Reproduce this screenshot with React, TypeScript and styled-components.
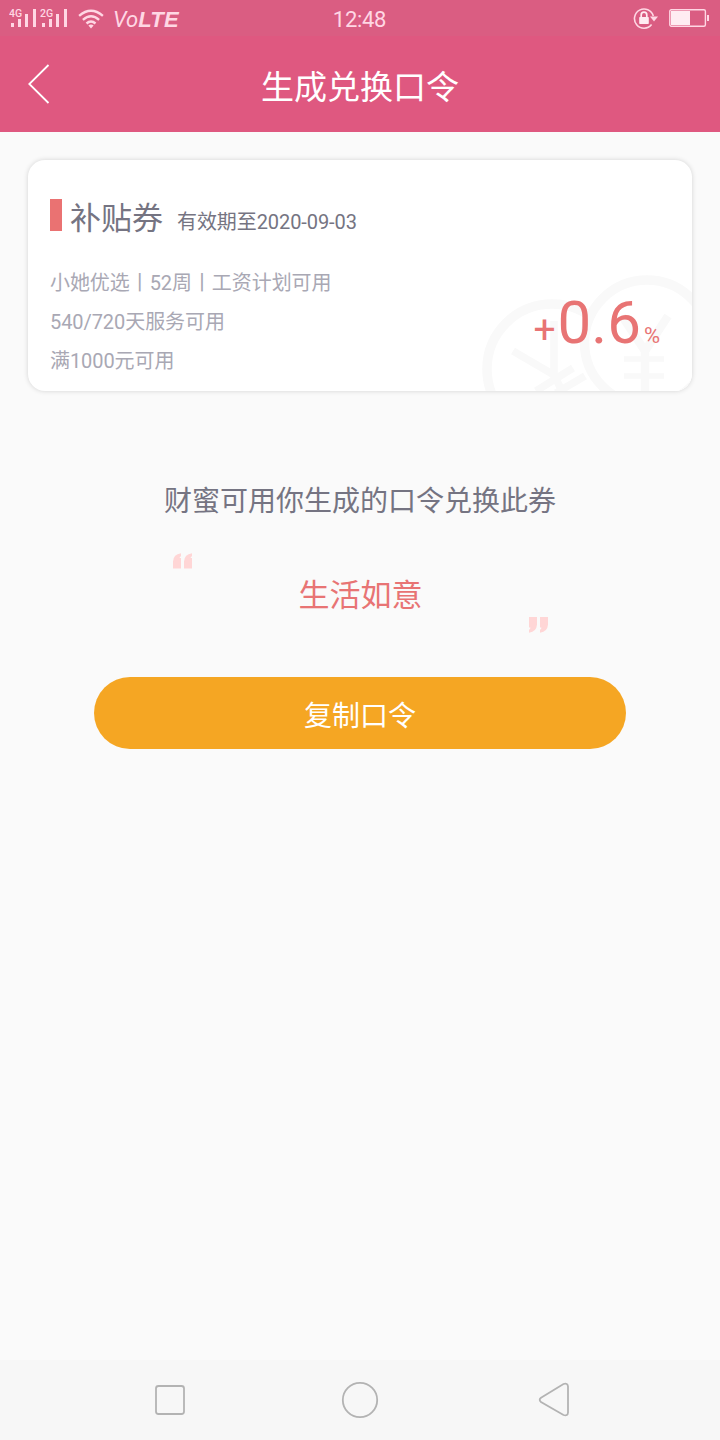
import React from "react";
import styled, { createGlobalStyle } from "styled-components";

const GlobalStyle = createGlobalStyle`
  * { box-sizing: border-box; }
  html, body { margin: 0; padding: 0; }
  body {
    background: #fafafa;
    font-family: Roboto, "Noto Sans CJK SC", sans-serif;
  }
`;

const Screen = styled.div`
  width: 720px;
  height: 1440px;
  display: flex;
  flex-direction: column;
  background: #fafafa;
  overflow: hidden;
`;

const StatusBar = styled.div`
  height: 36px;
  flex: none;
  display: grid;
  grid-template-columns: 1fr auto 1fr;
  align-items: center;
  padding: 0 11px 0 9px;
  background: #da5d82;
  color: #ffd7e4;
`;

const StatusGroup = styled.div<{ $end?: boolean }>`
  display: flex;
  align-items: center;
  justify-content: ${(p) => (p.$end ? "flex-end" : "flex-start")};
  gap: ${(p) => (p.$end ? 10 : 7)}px;
  height: 36px;
`;

const SignalPair = styled.div`
  display: flex;
  margin-bottom: 2px;
`;

const Volte = styled.span`
  font-size: 22px;
  line-height: 36px;
  font-style: italic;
  margin-left: 2px;
  padding-top: 2px;
  b {
    font-family: "Liberation Sans", sans-serif;
    font-weight: 700;
    letter-spacing: 0.2px;
  }
`;

const Clock = styled.span`
  font-size: 22px;
  line-height: 36px;
  letter-spacing: -0.3px;
  padding: 2px 0 0 1px;
`;

const NavBar = styled.header`
  height: 96px;
  flex: none;
  display: grid;
  grid-template-columns: 80px 1fr 80px;
  align-items: center;
  background: #df5880;
`;

const BackButton = styled.button`
  border: 0;
  background: none;
  padding: 0 0 0 27px;
  height: 96px;
  display: flex;
  align-items: center;
`;

const Title = styled.h1`
  margin: 0;
  padding-top: 7px;
  font-size: 33px;
  line-height: 48px;
  font-weight: 400;
  text-align: center;
  color: #fff;
`;

const Content = styled.main`
  flex: 1;
  display: flex;
  flex-direction: column;
  align-items: center;
  padding-top: 28px;
`;

const Card = styled.section`
  position: relative;
  width: 664px;
  height: 231px;
  flex: none;
  display: flex;
  justify-content: space-between;
  align-items: flex-end;
  border-radius: 17px;
  background: #fff;
  box-shadow: 0 0 5px rgba(0, 0, 0, 0.16);
  overflow: hidden;
`;

const Coins = styled.svg`
  position: absolute;
  right: 0;
  bottom: 0;
`;

const CouponInfo = styled.div`
  align-self: flex-start;
  padding: 35px 0 0 22px;
`;

const CouponHead = styled.div`
  display: flex;
  align-items: baseline;
  height: 48px;
  margin-bottom: 20px;
  color: #757482;
`;

const Marker = styled.i`
  align-self: flex-start;
  width: 12px;
  height: 32px;
  margin: 4px 8px 0 0;
  background: #ea7272;
`;

const CouponName = styled.span`
  font-size: 31px;
  line-height: 48px;
`;

const Validity = styled.span`
  margin-left: 14px;
  font-size: 20px;
  letter-spacing: -0.08px;
`;

const Terms = styled.p<{ $height: number }>`
  margin: 0;
  font-size: 20px;
  letter-spacing: -0.07px;
  line-height: ${(p) => p.$height}px;
  color: #a9a8b4;
`;

const Rate = styled.div`
  position: relative;
  display: flex;
  align-items: baseline;
  padding: 0 32px 20px 0;
  line-height: 70px;
  color: #e87474;
`;

const RatePart = styled.span<{ $size: number; $gap?: number }>`
  font-size: ${(p) => p.$size}px;
  margin-right: ${(p) => p.$gap ?? 0}px;
`;

const Hint = styled.p`
  margin: 91px 0 0;
  font-size: 28px;
  line-height: 40px;
  color: #757482;
`;

const Phrase = styled.div`
  width: 376px;
  height: 80px;
  margin-top: 31px;
  display: flex;
  justify-content: space-between;
  color: #e87474;
  font-size: 31px;
  line-height: 86px;
`;

const Quote = styled.svg<{ $low?: boolean }>`
  align-self: ${(p) => (p.$low ? "flex-end" : "flex-start")};
`;

const CopyButton = styled.button`
  width: 532px;
  height: 72px;
  margin-top: 44px;
  padding: 7px 0 0;
  border: 0;
  border-radius: 36px;
  background: #f5a623;
  color: #fff;
  font-family: inherit;
  font-size: 28px;
  line-height: 40px;
`;

const SystemNav = styled.nav`
  height: 80px;
  flex: none;
  display: grid;
  grid-template-columns: 32px 38px 33px;
  align-items: center;
  column-gap: 155px;
  padding-left: 154px;
  background: #f7f7f7;

  svg:last-child { margin-left: 4px; }
`;

function Signal({ label }: { label: string }) {
  return (
    <svg width="31" height="22" viewBox="0 0 31 22" fill="currentColor">
      <text x="0" y="9.5" fontSize="10.5" fontWeight="500" fontFamily="Roboto">{label}</text>
      <rect x="2" y="16" width="3" height="4" />
      <rect x="9" y="12" width="3" height="8" />
      <rect x="16" y="7" width="3" height="13" />
      <rect x="24" y="2" width="3" height="18" />
    </svg>
  );
}

function Wifi() {
  return (
    <svg width="26" height="20" viewBox="0 0 26 20" fill="none" stroke="currentColor" strokeWidth="2.4">
      <path d="M1.1 6.9Q13-3.3 24.9 6.9" />
      <path d="M4.9 10.8Q13 3.8 21.1 10.8" />
      <path d="M8.5 14.5Q13 10.4 17.5 14.5" />
      <path d="M10.4 16.5Q13 14.4 15.6 16.5L13 19.4Z" fill="currentColor" stroke="none" />
    </svg>
  );
}

function RotationLock() {
  return (
    <svg width="26" height="26" viewBox="0 0 26 26" fill="none" stroke="currentColor">
      <path d="M18.6 18.6A9.6 9.6 0 1 1 20.3 10" strokeWidth="1.6" />
      <path d="M17 10.6H25L21 15.4Z" fill="currentColor" stroke="none" />
      <rect x="6.2" y="11" width="9.6" height="7" rx="0.8" fill="#ffecf2" stroke="none" />
      <path d="M8.2 11.5V9a2.8 2.8 0 0 1 5.6 0V11.5" stroke="#ffecf2" strokeWidth="1.7" />
    </svg>
  );
}

function Battery() {
  return (
    <svg width="40" height="20" viewBox="0 0 40 20">
      <rect x="0.8" y="0.8" width="35.6" height="16.4" rx="1.5" fill="none" stroke="currentColor" strokeWidth="1.4" />
      <rect x="2" y="2" width="19" height="14" fill="#ffecf2" />
      <rect x="38" y="6" width="2" height="6" fill="currentColor" />
    </svg>
  );
}

function CoinArt() {
  return (
    <Coins width="212" height="120" viewBox="0 0 212 120" fill="none" stroke="#f9f9f9" strokeWidth="9.5">
      <circle cx="72" cy="98" r="65" />
      <path d="M74 50V104L83 122M33 80L74 104M56 120L93 97M76 122L105 105" strokeWidth="7.5" strokeLinejoin="round" />
      <circle cx="167" cy="71.5" r="62.5" fill="#fff" />
      <path d="M142 45L165 80L188 45M165 80V120" strokeWidth="8.5" />
      <path d="M144 88H184M144 105H184" strokeWidth="5.5" />
    </Coins>
  );
}

export default function App() {
  return (
    <Screen>
      <GlobalStyle />
      <StatusBar>
        <StatusGroup>
          <SignalPair>
            <Signal label="4G" />
            <Signal label="2G" />
          </SignalPair>
          <Wifi />
          <Volte>Vo<b>LTE</b></Volte>
        </StatusGroup>
        <Clock>12:48</Clock>
        <StatusGroup $end>
          <RotationLock />
          <Battery />
        </StatusGroup>
      </StatusBar>
      <NavBar>
        <BackButton aria-label="返回">
          <svg width="23" height="40" viewBox="0 0 23 40" fill="none" stroke="#fff" strokeWidth="1.8">
            <path d="M21.5 1L2.3 20L21.5 39" />
          </svg>
        </BackButton>
        <Title>生成兑换口令</Title>
      </NavBar>
      <Content>
        <Card>
          <CoinArt />
          <CouponInfo>
            <CouponHead>
              <Marker />
              <CouponName>补贴券</CouponName>
              <Validity>有效期至2020-09-03</Validity>
            </CouponHead>
            <Terms $height={40}>小她优选丨52周丨工资计划可用</Terms>
            <Terms $height={39}>540/720天服务可用</Terms>
            <Terms $height={38}>满1000元可用</Terms>
          </CouponInfo>
          <Rate>
            <RatePart $size={39} $gap={2}>+</RatePart>
            <RatePart $size={60} $gap={3}>0.6</RatePart>
            <RatePart $size={22}>%</RatePart>
          </Rate>
        </Card>
        <Hint>财蜜可用你生成的口令兑换此券</Hint>
        <Phrase>
          <Quote width="21" height="16" viewBox="0 0 21 16" fill="#ffd6d6">
            <path d="M1 15.5V8.5Q1.4 1.4 9 0.3V3.2Q7.6 3.8 7.6 5H9V15.5ZM12 15.5V8.5Q12.4 1.4 20 0.3V3.2Q18.6 3.8 18.6 5H20V15.5Z" />
          </Quote>
          <span>生活如意</span>
          <Quote $low width="20" height="16" viewBox="0 0 20 16" fill="#ffd6d6">
            <path d="M20 0V7.5Q19.6 14.6 12 15.7V12.8Q13.4 12.2 13.4 10.5H12V0ZM9 0V7.5Q8.6 14.6 1 15.7V12.8Q2.4 12.2 2.4 10.5H1V0Z" />
          </Quote>
        </Phrase>
        <CopyButton>复制口令</CopyButton>
      </Content>
      <SystemNav>
        <svg width="32" height="32" viewBox="0 0 32 32" fill="none" stroke="#b3b3b3" strokeWidth="1.8">
          <rect x="2" y="2" width="28" height="28" rx="2.5" />
        </svg>
        <svg width="38" height="38" viewBox="0 0 38 38" fill="none" stroke="#b3b3b3" strokeWidth="1.8">
          <circle cx="19" cy="19" r="17.2" />
        </svg>
        <svg width="33" height="36" viewBox="0 0 33 36" fill="none" stroke="#b3b3b3" strokeWidth="1.8">
          <path d="M3 15.8L25.5 2Q29.8 0.6 30 4.5V30.5Q29.8 34.4 25.5 33L3 20Q0.4 17.8 3 15.8Z" />
        </svg>
      </SystemNav>
    </Screen>
  );
}
